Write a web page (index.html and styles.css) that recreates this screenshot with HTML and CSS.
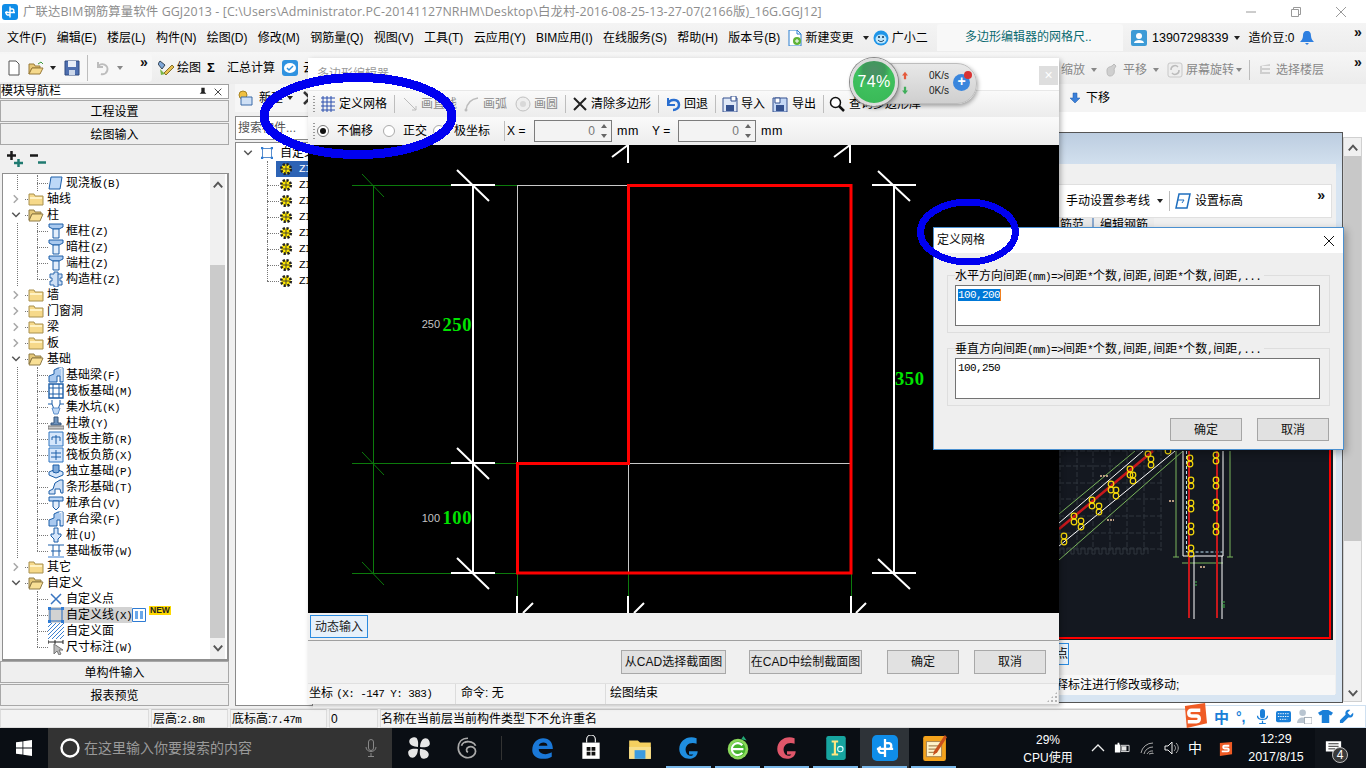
FILE: index.html
```html
<!DOCTYPE html>
<html lang="zh">
<head>
<meta charset="utf-8">
<title>广联达BIM钢筋算量软件 GGJ2013</title>
<link rel="stylesheet" href="styles.css">
</head>
<body>
<svg class="sprite" aria-hidden="true">
  <symbol id="folder" viewBox="0 0 16 16"><path d="M1 3h5l1 2h8v9H1z" fill="#f6d98a" stroke="#a8904f"/><path d="M2 6h12v2H2z" fill="#fff2c4"/></symbol>
  <symbol id="folderopen" viewBox="0 0 16 16"><path d="M1 3h5l1 2h6v2H4L1 13z" fill="#e5c878" stroke="#8f7a45"/><path d="M4 7h11l-3 7H1z" fill="#f8df95" stroke="#8f7a45"/></symbol>
  <symbol id="cr" viewBox="0 0 16 16"><path d="M5 3l5 5-5 5" stroke="#a8a8a8" stroke-width="2" fill="none"/></symbol>
  <symbol id="cd" viewBox="0 0 16 16"><path d="M3 5l5 5 5-5" stroke="#555" stroke-width="2" fill="none"/></symbol>
  <symbol id="col" viewBox="0 0 16 16"><path d="M1 1h14v3l-4 2H5L1 4z" fill="#a9c9ef" stroke="#1c5ea8"/><path d="M5 6h6v9H5z" fill="#e3eefb" stroke="#1c5ea8"/></symbol>
  <symbol id="colx" viewBox="0 0 16 16"><path d="M2 3h4V1h4v2h4v4h-2v3h2v4h-4v2H6v-2H2v-4h2V7H2z" fill="#cfe0f5" stroke="#2a66ac"/><path d="M10 3v11" stroke="#2a66ac"/></symbol>
  <symbol id="beam" viewBox="0 0 16 16"><path d="M1 15V9l5-2V3l4-2h5v14h-3V9H9v6z" fill="#a9c9ef" stroke="#1c5ea8"/><path d="M11 2l3-1v13" fill="none" stroke="#fff"/></symbol>
  <symbol id="raft" viewBox="0 0 16 16"><path d="M1 1h14v14H1z" fill="#fff" stroke="#1c5ea8" stroke-width="1.400"/><path d="M1 5h14M1 11h14M5 1v14M11 1v14" stroke="#1c5ea8"/></symbol>
  <symbol id="pit" viewBox="0 0 16 16"><path d="M0 5h4l2 5h4l2-5h4M4 1v4M12 1v4" fill="none" stroke="#1c5ea8"/><path d="M4 9h8l-2 6H6z" fill="#bcd6f5" stroke="#5d8fcb"/></symbol>
  <symbol id="pier" viewBox="0 0 16 16"><path d="M6 2h4v6h3v2H3V8h3z" fill="#6f93bd" stroke="#34557d"/><path d="M0 11h16v3H0z" fill="#c8c8c8" stroke="#777"/></symbol>
  <symbol id="rebm" viewBox="0 0 16 16"><path d="M1 1h14v14H1z" fill="#d5e6fb" stroke="#2f74c0"/><path d="M8 4v9M4 6h8v4M4 6v3" fill="none" stroke="#1c5ea8"/></symbol>
  <symbol id="rebn" viewBox="0 0 16 16"><path d="M1 1h14v14H1z" fill="#d5e6fb" stroke="#2f74c0"/><path d="M3 6h10M3 10h10M8 3v10" fill="none" stroke="#1c5ea8"/></symbol>
  <symbol id="indep" viewBox="0 0 16 16"><path d="M1 9l7-3 7 3v3l-7 3-7-3z" fill="#d5e6fb" stroke="#1c5ea8"/><path d="M5 2h6v7l-3 1-3-1z" fill="#7ea9da" stroke="#1c5ea8"/></symbol>
  <symbol id="strip" viewBox="0 0 16 16"><path d="M1 15v-3l4-2 2-6 5-3h3v13h-2l-1-4H7v5z" fill="#cfe0f5" stroke="#1c5ea8"/></symbol>
  <symbol id="cap" viewBox="0 0 16 16"><path d="M1 2h14v4H1z" fill="#bcd6f5" stroke="#1c5ea8"/><path d="M5 6h6v6l-3 3-3-3z" fill="#e3eefb" stroke="#1c5ea8"/></symbol>
  <symbol id="pile" viewBox="0 0 16 16"><path d="M6 1h4v6h3v2l-3 3v3H6v-3L3 9V7h3z" fill="#d5e6fb" stroke="#1c5ea8"/></symbol>
  <symbol id="band" viewBox="0 0 16 16"><path d="M0 2h16M0 14h16M5 2v12M11 2v12M3 8h10" stroke="#1c5ea8" fill="none"/><path d="M0 13h16v2H0z" fill="#9dbfe8"/></symbol>
  <symbol id="pt" viewBox="0 0 16 16"><path d="M3 3l10 10M13 3L3 13" stroke="#3a75c0" stroke-width="1.500"/></symbol>
  <symbol id="ln" viewBox="0 0 16 16"><path d="M2 2h12v12H2z" fill="none" stroke="#2168bd"/><path d="M0 0h3v3H0zM13 0h3v3h-3zM0 13h3v3H0zM13 13h3v3h-3z" fill="#2f7bd3"/></symbol>
  <symbol id="face" viewBox="0 0 16 16"><path d="M0 4l4-4M0 8l8-8M0 12L12 0M0 16L16 0M4 16L16 4M8 16l8-8M12 16l4-4" stroke="#3a80d0"/></symbol>
  <symbol id="dim" viewBox="0 0 16 16"><path d="M0 1v4M0 3h15M15 1v4M7 1v4" stroke="#222"/><path d="M6 5l0 10 3-3 2 4 2-1-2-4h4z" fill="#bbb" stroke="#777"/></symbol>
  <symbol id="plate" viewBox="0 0 16 16"><path d="M3 2h11l-2 12H1z" fill="#bdd8f7" stroke="#1c5ea8"/></symbol>
  <symbol id="gear" viewBox="0 0 16 16"><circle cx="8" cy="8" r="5.500" fill="#ffe800" stroke="#222" stroke-dasharray="2.500 1.800" stroke-width="3"/><path d="M4 8h8M8 4v8" stroke="#333"/></symbol>
  <symbol id="logo" viewBox="0 0 16 16"><rect width="16" height="16" rx="3" fill="#0f8de8"/><path d="M8 2.500v11M3 8.500h10M8 5h2.500a1.800 1.800 0 0 1 0 3.500M8 11H5.500a1.800 1.800 0 0 1 0-3.500" fill="none" stroke="#fff" stroke-width="1.400"/></symbol>
  <symbol id="swirl" viewBox="0 0 24 24"><path d="M19 3C11 0 3 5 3 13c0 6 5 9 9 9 5 0 8-3 8-7h-8v3h4c-1 2-6 2-7-3C8 9 13 6 19 8z" fill="currentColor"/></symbol>
</svg>

<div class="title">
  <svg class="ico16 logo"><use href="#logo"/></svg>
  <span class="title-text">广联达BIM钢筋算量软件 GGJ2013 - [C:\Users\Administrator.PC-20141127NRHM\Desktop\白龙村-2016-08-25-13-27-07(2166版)_16G.GGJ12]</span>
  <div class="winbtns">
    <svg class="winbtn" viewBox="0 0 12 12"><path d="M1 6h10" stroke="#9a9a9a"/></svg>
    <svg class="winbtn" viewBox="0 0 12 12"><path d="M1.500 3.500h7v7h-7zM3.500 3.500v-2h7v7h-2" fill="none" stroke="#9a9a9a"/></svg>
    <svg class="winbtn" viewBox="0 0 12 12"><path d="M1 1l10 10M11 1L1 11" stroke="#9a9a9a"/></svg>
  </div>
</div>

<div class="menu">
  <div class="m-left">
    <span>文件(F)</span><span>编辑(E)</span><span>楼层(L)</span><span>构件(N)</span><span>绘图(D)</span><span>修改(M)</span><span>钢筋量(Q)</span><span>视图(V)</span><span>工具(T)</span><span>云应用(Y)</span><span>BIM应用(I)</span><span>在线服务(S)</span><span>帮助(H)</span><span>版本号(B)</span>
    <span class="m-item">
      <svg class="ico16" viewBox="0 0 16 16"><path d="M2 0h8l4 4v12H2z" fill="#fff" stroke="#2a7fd0"/><path d="M10 0v4h4" fill="none" stroke="#2a7fd0"/><circle cx="10" cy="11" r="4" fill="#5fb336"/><path d="M8 11h4M10 9v4" stroke="#fff"/></svg>
      新建变更<i class="drop"></i>
    </span>
    <span class="m-item m-xiao">
      <svg class="ico16" viewBox="0 0 16 16"><circle cx="8" cy="8" r="7.500" fill="#1e95e8"/><ellipse cx="8" cy="9" rx="5.500" ry="4.500" fill="#bfe6fb"/><circle cx="6" cy="7" r="1" fill="#135"/><circle cx="10" cy="7" r="1" fill="#135"/><path d="M5 10c2 2 4 2 6 0" stroke="#135" fill="none"/></svg>
      广小二
    </span>
  </div>
  <div class="m-tab">多边形编辑器的网格尺..</div>
  <div class="m-user">
    <svg class="ico16" viewBox="0 0 16 16"><rect width="16" height="16" rx="2" fill="#3d9bd6"/><circle cx="8" cy="6" r="3" fill="#fff"/><path d="M3 13c0-4 10-4 10 0z" fill="#fff"/></svg>
    <span class="phone">13907298339</span><i class="drop"></i>
    <span class="beans">造价豆:0</span>
    <svg class="ico16" viewBox="0 0 16 16"><path d="M8 1c3 0 4 2 4 5 0 3 2 5 3 6H1c1-1 3-3 3-6 0-3 1-5 4-5z" fill="#2e7fe0"/><path d="M6 13h4l-2 2z" fill="#2e7fe0"/></svg>
  </div>
  <span class="more">»</span>
</div>

<div class="tools">
  <div class="t-group t-a">
    <svg class="ico16" viewBox="0 0 16 16"><path d="M3 1h7l3 3v11H3z" fill="#fff" stroke="#555"/></svg>
    <svg class="ico16 t-open" viewBox="0 0 16 16"><path d="M1 4h5l1 2h5v2H4l-3 6z" fill="#e8c878" stroke="#997a38"/><path d="M4 8h11l-3 6H1z" fill="#f5d98c" stroke="#997a38"/><path d="M10 4l3-2 2 2" fill="none" stroke="#3a9a3a"/></svg>
    <i class="drop"></i>
    <svg class="ico16 t-save" viewBox="0 0 16 16"><path d="M1 1h14v14H1z" fill="#4e6fb0" stroke="#2e4a80"/><path d="M4 1h8v6H4z" fill="#e8eef8"/><path d="M5 10h6v5H5z" fill="#cdd8ea"/></svg>
    <b class="sep"></b>
    <svg class="ico16" viewBox="0 0 16 16"><path d="M3 7a5 5 0 1 1 3 7M3 2v5h5" fill="none" stroke="#bdbdbd" stroke-width="2"/></svg>
    <i class="drop drop-g"></i>
    <span class="more">»</span>
  </div>
  <div class="t-group t-b">
    <svg class="ico16" viewBox="0 0 16 16"><path d="M2 1l5 4-3 4-4-5z" fill="#7fa7d8" stroke="#345"/><path d="M6 13l8-8 2 2-8 8z" fill="#e9c050" stroke="#85702a"/><path d="M2 9l5 5-4 1z" fill="#7ab648"/></svg>
    <span class="tb1">绘图</span>
    <b class="sigma">Σ</b>
    <span class="tb2">汇总计算</span>
    <svg class="ico16 t-cloud" viewBox="0 0 16 16"><rect width="16" height="16" rx="3" fill="#2f92e0"/><ellipse cx="8" cy="8" rx="6" ry="5" fill="#fff"/><path d="M5 8l2 2 4-4" stroke="#2f92e0" fill="none" stroke-width="1.500"/></svg>
    <span class="tb3">云</span>
  </div>
  <div class="t-group t-c">
    <span>缩放</span><i class="drop drop-g d1"></i>
    <svg class="ico16" viewBox="0 0 16 16"><path d="M3 8c0-3 3-3 5-4l2-2 2 2-2 3c1 3 0 7-4 7-3 0-3-3-3-6z" fill="#cfcfcf" stroke="#bbb"/></svg>
    <span class="tc-l">平移</span><i class="drop drop-g d2"></i>
    <svg class="ico16" viewBox="0 0 16 16"><rect x="1" y="1" width="14" height="14" rx="2" fill="#eee" stroke="#c8c8c8"/><path d="M4 8a4 4 0 0 1 7-3M12 8a4 4 0 0 1-7 3" fill="none" stroke="#bbb" stroke-width="1.500"/></svg>
    <span class="tc-l">屏幕旋转</span><i class="drop drop-g d3"></i>
    <b class="sep"></b>
    <svg class="ico16" viewBox="0 0 16 16"><path d="M3 4l10-2v2H5v2h8v2H5v2h8v2H3z" fill="#cfcfcf"/></svg>
    <span class="tc-l">选择楼层</span>
  </div>
  <span class="more">»</span>
</div>

<div class="main">
  <aside class="nav">
    <div class="nav-head"><span>模块导航栏</span>
      <svg class="nav-ic" viewBox="0 0 12 12"><path d="M4 1h4v5l2 2H2l2-2zM6 8v4" fill="#222"/></svg>
      <svg class="nav-ic" viewBox="0 0 12 12"><path d="M2 2l8 8M10 2l-8 8" stroke="#222"/></svg>
    </div>
    <div class="nav-btn">工程设置</div>
    <div class="nav-btn">绘图输入</div>
    <div class="nav-tool">
      <svg class="ico16" viewBox="0 0 16 16"><path d="M0 4.500h9M4.500 0v9" stroke="#1a1a1a" stroke-width="2.500"/><path d="M7 12h9M11.500 8v8" stroke="#1f7a70" stroke-width="2.500"/></svg>
      <svg class="ico16" viewBox="0 0 16 16"><path d="M0 4.500h8" stroke="#1a1a1a" stroke-width="2.500"/><path d="M8 11.500h8" stroke="#1f7a70" stroke-width="2.500"/></svg>
    </div>
    <div class="tree-box">
      <div class="tree">
        <div class="r l1 last-none"><svg class="ico16"><use href="#plate"/></svg><span>现浇板<em>(B)</em></span></div>
        <div class="r l0"><svg class="ch"><use href="#cr"/></svg><svg class="ico16"><use href="#folder"/></svg><span>轴线</span></div>
        <div class="r l0"><svg class="ch"><use href="#cd"/></svg><svg class="ico16"><use href="#folderopen"/></svg><span>柱</span></div>
        <div class="r l1"><svg class="ico16"><use href="#col"/></svg><span>框柱<em>(Z)</em></span></div>
        <div class="r l1"><svg class="ico16"><use href="#col"/></svg><span>暗柱<em>(Z)</em></span></div>
        <div class="r l1"><svg class="ico16"><use href="#col"/></svg><span>端柱<em>(Z)</em></span></div>
        <div class="r l1 end"><svg class="ico16"><use href="#colx"/></svg><span>构造柱<em>(Z)</em></span></div>
        <div class="r l0"><svg class="ch"><use href="#cr"/></svg><svg class="ico16"><use href="#folder"/></svg><span>墙</span></div>
        <div class="r l0"><svg class="ch"><use href="#cr"/></svg><svg class="ico16"><use href="#folder"/></svg><span>门窗洞</span></div>
        <div class="r l0"><svg class="ch"><use href="#cr"/></svg><svg class="ico16"><use href="#folder"/></svg><span>梁</span></div>
        <div class="r l0"><svg class="ch"><use href="#cr"/></svg><svg class="ico16"><use href="#folder"/></svg><span>板</span></div>
        <div class="r l0"><svg class="ch"><use href="#cd"/></svg><svg class="ico16"><use href="#folderopen"/></svg><span>基础</span></div>
        <div class="r l1"><svg class="ico16"><use href="#beam"/></svg><span>基础梁<em>(F)</em></span></div>
        <div class="r l1"><svg class="ico16"><use href="#raft"/></svg><span>筏板基础<em>(M)</em></span></div>
        <div class="r l1"><svg class="ico16"><use href="#pit"/></svg><span>集水坑<em>(K)</em></span></div>
        <div class="r l1"><svg class="ico16"><use href="#pier"/></svg><span>柱墩<em>(Y)</em></span></div>
        <div class="r l1"><svg class="ico16"><use href="#rebm"/></svg><span>筏板主筋<em>(R)</em></span></div>
        <div class="r l1"><svg class="ico16"><use href="#rebn"/></svg><span>筏板负筋<em>(X)</em></span></div>
        <div class="r l1"><svg class="ico16"><use href="#indep"/></svg><span>独立基础<em>(P)</em></span></div>
        <div class="r l1"><svg class="ico16"><use href="#strip"/></svg><span>条形基础<em>(T)</em></span></div>
        <div class="r l1"><svg class="ico16"><use href="#cap"/></svg><span>桩承台<em>(V)</em></span></div>
        <div class="r l1"><svg class="ico16"><use href="#beam"/></svg><span>承台梁<em>(F)</em></span></div>
        <div class="r l1"><svg class="ico16"><use href="#pile"/></svg><span>桩<em>(U)</em></span></div>
        <div class="r l1 end"><svg class="ico16"><use href="#band"/></svg><span>基础板带<em>(W)</em></span></div>
        <div class="r l0"><svg class="ch"><use href="#cr"/></svg><svg class="ico16"><use href="#folder"/></svg><span>其它</span></div>
        <div class="r l0"><svg class="ch"><use href="#cd"/></svg><svg class="ico16"><use href="#folderopen"/></svg><span>自定义</span></div>
        <div class="r l1 tail"><svg class="ico16"><use href="#pt"/></svg><span>自定义点</span></div>
        <div class="r l1 tail sel"><svg class="ico16"><use href="#ln"/></svg><span class="hl">自定义线<em>(X)</em></span>
          <svg class="newicon" viewBox="0 0 14 14"><path d="M.5.5h13v13H.5z" fill="#fff" stroke="#2f7bd3"/><path d="M3 3h3v8H3zM8 3h3v8H8z" fill="#6aa8ea"/></svg>
          <span class="newtag">NEW</span>
        </div>
        <div class="r l1 tail"><svg class="ico16"><use href="#face"/></svg><span>自定义面</span></div>
        <div class="r l1 tail end"><svg class="ico16"><use href="#dim"/></svg><span>尺寸标注<em>(W)</em></span></div>
      </div>
      <div class="vscroll">
        <svg class="arrow" viewBox="0 0 10 10"><path d="M1.500 7L5 3l3.500 4" fill="none" stroke="#555" stroke-width="1.600"/></svg>
        <div class="track"></div>
        <div class="thumb"></div>
        <svg class="arrow" viewBox="0 0 10 10"><path d="M1.500 3L5 7l3.500-4" fill="none" stroke="#555" stroke-width="1.600"/></svg>
      </div>
    </div>
    <div class="nav-btn nb-low">单构件输入</div>
    <div class="nav-btn">报表预览</div>
  </aside>

  <section class="mid">
    <div class="mid-tool">
      <svg class="ico16" viewBox="0 0 16 16"><circle cx="5" cy="5" r="4" fill="#f0c040" stroke="#a88420"/><path d="M3 7h11v8H3z" fill="#cfe0f5" stroke="#3a6aa8"/></svg>
      <span>新建</span><i class="drop"></i>
      <svg class="ico16" viewBox="0 0 16 16"><path d="M2 2l12 12M14 2L2 14" stroke="#333" stroke-width="2.500"/></svg>
    </div>
    <div class="mid-search">搜索构件...</div>
    <div class="mid-tree">
      <div class="mt-row"><svg class="ch"><use href="#cd"/></svg><svg class="ico12"><use href="#ln"/></svg><span>自定义</span></div>
      <div class="mt-row mt-sel"><svg class="ico14"><use href="#gear"/></svg><span>ZI</span></div>
      <div class="mt-row mt-k"><svg class="ico14"><use href="#gear"/></svg><span>ZI</span></div>
      <div class="mt-row mt-k"><svg class="ico14"><use href="#gear"/></svg><span>ZI</span></div>
      <div class="mt-row mt-k"><svg class="ico14"><use href="#gear"/></svg><span>ZI</span></div>
      <div class="mt-row mt-k"><svg class="ico14"><use href="#gear"/></svg><span>ZI</span></div>
      <div class="mt-row mt-k"><svg class="ico14"><use href="#gear"/></svg><span>ZI</span></div>
      <div class="mt-row mt-k"><svg class="ico14"><use href="#gear"/></svg><span>ZI</span></div>
      <div class="mt-row mt-k"><svg class="ico14"><use href="#gear"/></svg><span>ZI</span></div>
    </div>
  </section>

  <section class="work">
    <div class="work-tool">
      <svg class="ico12" viewBox="0 0 12 12"><path d="M4 1h4v5h3L6 11 1 6h3z" fill="#3a7fd8" stroke="#1f5aa8" stroke-width=".5"/></svg>
      <span>下移</span>
    </div>
    <div class="work-body"></div>
  </section>
</div>

<div class="status">
  <div class="st st0"></div>
  <div class="st st1">层高:<em>2.8m</em></div>
  <div class="st st2">底标高:<em>7.47m</em></div>
  <div class="st st3">0</div>
  <div class="st st4">名称在当前层当前构件类型下不允许重名</div>
</div>

<div class="taskbar">
  <svg class="win" viewBox="0 0 16 16"><path d="M0 2.300l6.500-.9v6.200H0zM7.300 1.300L16 0v7.600H7.300zM0 8.400h6.500v6.200L0 13.700zM7.300 8.400H16V16l-8.700-1.300z" fill="#fff"/></svg>
  <div class="search">
    <svg class="cortana" viewBox="0 0 20 20"><circle cx="10" cy="10" r="8.500" fill="none" stroke="#fff" stroke-width="2.400"/></svg>
    <span>在这里输入你要搜索的内容</span>
    <svg class="mic" viewBox="0 0 12 18"><rect x="3.500" y=".5" width="5" height="11" rx="2.500" fill="none" stroke="#888"/><path d="M1 8c0 6 10 6 10 0M6 14v3M3 17.500h6" fill="none" stroke="#888"/></svg>
  </div>
  <div class="apps">
    <div class="app"><svg viewBox="0 0 24 24"><path d="M11 11C7 11 3 9 3 6s3-4 5-4 4 3 3 9zM13 11c0-4 2-8 5-8s4 3 4 5-3 4-9 3zM13 13c4 0 8 2 8 5s-3 4-5 4-4-3-3-9zM11 13c0 4-2 8-5 8s-4-3-4-5 3-4 9-3z" fill="#e6e6e6"/></svg></div>
    <div class="app"><svg viewBox="0 0 24 24"><path d="M12 3c-6 0-9 4-9 9s4 9 9 9c4 0 7-3 7-6s-3-5-6-4-3 4-1 5M9 7c4-2 9 0 10 3M6 10c1-3 3-4 6-4" fill="none" stroke="#aaa" stroke-width="1.600"/></svg></div>
    <b class="tb-sep"></b>
    <div class="app"><svg viewBox="0 0 24 24"><path d="M3 14C3 7 8 3 13 3c6 0 9 4 9 10H9c0 5 7 6 12 3v4c-7 4-18 2-18-6zm6-4h8c0-4-7-4-8 0z" fill="#1a78d8"/></svg></div>
    <div class="app"><svg viewBox="0 0 24 24"><path d="M8 7V4a4 4 0 0 1 8 0v3" fill="none" stroke="#fff"/><path d="M4 7h16v15H4z" fill="#fff"/><path d="M8 11h3.500v3.500H8zM12.500 11H16v3.500h-3.500zM8 15.500h3.500V19H8zM12.500 15.500H16V19h-3.500z" fill="#111"/></svg></div>
    <div class="app"><svg viewBox="0 0 24 24"><path d="M2 5h8l2 2h10v15H2z" fill="#f5d060"/><path d="M2 11h20v11H2z" fill="#f9e08c"/><path d="M7 14h10v8H7z" fill="#3c9be0"/></svg></div>
    <div class="app on"><svg class="g-blue"><use href="#swirl"/></svg></div>
    <div class="app on"><svg viewBox="0 0 24 24"><circle cx="12" cy="13" r="9.500" fill="#8ad85a"/><circle cx="12" cy="13" r="7" fill="#46b52e"/><path d="M7 13h10M16 9.500A5.500 5.500 0 1 0 16 16.500" stroke="#fff" stroke-width="2" fill="none"/><path d="M17 1l3 4-5-1z" fill="#2a7"/></svg></div>
    <div class="app on"><svg class="g-red"><use href="#swirl"/></svg></div>
    <div class="app on"><svg viewBox="0 0 24 24"><rect x="3" y="1" width="18" height="22" rx="2" fill="#17a5a0"/><path d="M8 6h6M11 6v12M8 18h6" stroke="#ffe680" stroke-width="2"/><circle cx="16" cy="13" r="2.500" fill="none" stroke="#dff"/></svg></div>
    <div class="app on act"><svg class="ic-big" viewBox="0 0 16 16"><use href="#logo"/></svg></div>
    <div class="app on"><svg viewBox="0 0 24 24"><rect x="2" y="1" width="21" height="23" rx="2" fill="#f4a21c"/><rect x="5" y="6" width="14" height="14" fill="#fff2c8" stroke="#a85"/><path d="M7 10h9M7 13h9M7 16h6" stroke="#a85"/><path d="M22 0L12 15l-1 4 4-3L24 2z" fill="#c8501c"/></svg></div>
  </div>
  <div class="cpu"><span>29%</span><span>CPU使用</span></div>
  <div class="tray">
    <svg viewBox="0 0 14 10" class="tr-up"><path d="M1 8l6-6 6 6" fill="none" stroke="#eee" stroke-width="1.300"/></svg>
    <svg viewBox="0 0 18 14" class="tr-i"><path d="M1 3h3V1h2v2h1v9H1z" fill="#fff"/><path d="M8 4h9v7H8z" fill="none" stroke="#eee"/><path d="M9 5h5v5H9z" fill="#e8e8e8"/></svg>
    <svg viewBox="0 0 16 14" class="tr-i"><path d="M2 12a12 12 0 0 1 12-10M5 13a9 9 0 0 1 9-7M8 13a6 6 0 0 1 6-3M10 13l4-1v1" fill="none" stroke="#aaa"/></svg>
    <svg viewBox="0 0 16 14" class="tr-i"><path d="M1 5h3l4-4v12L4 9H1z" fill="none" stroke="#eee"/><path d="M10 4c2 2 2 4 0 6M12 2c3 3 3 7 0 10" fill="none" stroke="#aaa"/></svg>
    <span class="ime">中</span>
    <svg viewBox="0 0 16 16" class="tr-s"><path d="M2 2l13-1 0 13-13 2z" fill="#ee5a24"/><path d="M12 5H7c-2 0-2 3 0 3h3c2 0 2 3 0 3H4" fill="none" stroke="#fff" stroke-width="2"/></svg>
  </div>
  <div class="clock"><span>12:29</span><span>2017/8/15</span></div>
  <div class="notify">
    <svg viewBox="0 0 20 18"><path d="M1 1h18v12h-7l-3 4v-4H1z" fill="#fff"/><path d="M4 4h12M4 7h12M4 10h8" stroke="#111"/></svg>
    <span class="badge">4</span>
  </div>
</div>

<!-- back window -->
<div class="backwin">
  <div class="bw-panel">
    <div class="bw-tool">
      <span>手动设置参考线</span><i class="drop"></i><b class="sep"></b>
      <svg class="ico16" viewBox="0 0 16 16"><path d="M4 1h11l-3 14H1z" fill="none" stroke="#1f6fbf" stroke-width="1.500"/><path d="M3 7h6l-2 3" fill="none" stroke="#1f6fbf"/></svg>
      <span>设置标高</span>
      <span class="more">»</span>
    </div>
    <div class="bw-tabs"><span class="bwt1">筋范</span><span class="bwt2">编辑钢筋</span></div>
    <svg class="cad" viewBox="1000 228 333 411" aria-hidden="true">
      <rect x="1000" y="228" width="333" height="411" fill="#141820"/>
      <g stroke="#2f343c" stroke-dasharray="5 2" fill="none">
        <path d="M1059 450h103M1059 465h103M1059 482h103M1059 498h103M1059 515h103M1059 532h103M1059 548h103"/>
        <path d="M1060 450v100M1077 450v100M1093 450v100M1110 450v100M1127 450v100M1144 450v100M1161 450v100"/>
      </g>
      <path d="M1060 553v-6h4v6h3v-6h4v6h3v-6h4v6h3v-6h4v6h3v-6h4v6h3v-6h4v6h3v-6h4v6h3v-6h4v6h3v-6h4v6h3v-6h4v6h3v-6h4v6h3v-6h4v6h3v-6h4v6" stroke="#2f343c" fill="none"/>
      <g fill="none">
        <path d="M1059 513L1135 450M1059 559L1183 450" stroke="#7ab55c"/>
        <path d="M1059 522L1143 450M1059 545L1175 450" stroke="#fff"/>
        <path d="M1059 528L1153 450" stroke="#c8181c" stroke-width="2.500"/>
      </g>
      <g fill="none" stroke="#f5d90a" stroke-width="1.200">
        <circle cx="1064" cy="535" r="2.800"/><circle cx="1064" cy="541" r="2.800"/>
        <circle cx="1074" cy="515" r="2.800"/><circle cx="1074" cy="521" r="2.800"/><circle cx="1081" cy="520" r="2.800"/><circle cx="1081" cy="526" r="2.800"/>
        <circle cx="1092" cy="499" r="2.800"/><circle cx="1092" cy="505" r="2.800"/><circle cx="1099" cy="505" r="2.800"/><circle cx="1099" cy="511" r="2.800"/>
        <circle cx="1111" cy="483" r="2.800"/><circle cx="1111" cy="489" r="2.800"/><circle cx="1116" cy="489" r="2.800"/><circle cx="1116" cy="495" r="2.800"/>
        <circle cx="1130" cy="468" r="2.800"/><circle cx="1130" cy="474" r="2.800"/><circle cx="1133" cy="474" r="2.800"/><circle cx="1133" cy="480" r="2.800"/>
        <circle cx="1148" cy="453" r="2.800"/><circle cx="1151" cy="458" r="2.800"/><circle cx="1151" cy="464" r="2.800"/>
        <circle cx="1168" cy="450" r="2.800"/>
      </g>
      <g fill="none">
        <path d="M1176 450v106M1230 450v106M1182 562h41M1173 556h6M1227 556h6" stroke="#7ab55c"/>
        <path d="M1183 450v105h40V450" stroke="#fff"/>
        <path d="M1186.500 450v101h36" stroke="#bfe3f5" stroke-dasharray="3 2"/>
        <path d="M1189 450v167M1217 450v167" stroke="#c8181c" stroke-width="2"/>
        <path d="M1194 555v63M1222 555v63" stroke="#fff"/>
        <path d="M1195 581h2M1195 584h2M1222 601h3M1222 604h3M1222 606h3" stroke="#42b84a"/>
      </g>
      <g fill="none" stroke="#f5d90a" stroke-width="1.200">
        <circle cx="1190" cy="457" r="2.800"/><circle cx="1190" cy="463" r="2.800"/><circle cx="1216" cy="454" r="2.800"/><circle cx="1216" cy="460" r="2.800"/>
        <circle cx="1191" cy="479" r="2.800"/><circle cx="1191" cy="485" r="2.800"/><circle cx="1216" cy="479" r="2.800"/><circle cx="1216" cy="485" r="2.800"/>
        <circle cx="1191" cy="502" r="2.800"/><circle cx="1191" cy="508" r="2.800"/><circle cx="1216" cy="501" r="2.800"/><circle cx="1216" cy="507" r="2.800"/>
        <circle cx="1191" cy="525" r="2.800"/><circle cx="1191" cy="531" r="2.800"/><circle cx="1216" cy="525" r="2.800"/><circle cx="1216" cy="531" r="2.800"/>
        <circle cx="1191" cy="547" r="2.800"/><circle cx="1191" cy="553" r="2.800"/>
      </g>
      <path d="M1100 475h8M1169 500h6M1200 566h6M1107 519h7" stroke="#b89a80" stroke-width="2" stroke-dasharray="2 1"/>
      <path d="M1000 228h330v409h-330" fill="none" stroke="#f00" stroke-width="2"/>
    </svg>
    <div class="bw-pt"><span>点</span></div>
    <div class="bw-msg">释标注进行修改或移动;</div>
  </div>
</div>
<div class="rscroll">
  <svg class="arrow" viewBox="0 0 10 10"><path d="M1.500 7L5 3l3.500 4" fill="none" stroke="#555" stroke-width="1.600"/></svg>
  <div class="rthumb"></div>
  <div class="rtrack"></div>
  <svg class="arrow" viewBox="0 0 10 10"><path d="M1.500 3L5 7l3.500-4" fill="none" stroke="#555" stroke-width="1.600"/></svg>
</div>

<!-- polygon editor -->
<div class="editor">
  <div class="ed-title"><span>多边形编辑器</span><div class="ed-close">×</div></div>
  <div class="ed-tool">
    <b class="grip"></b>
    <svg class="ico16" viewBox="0 0 16 16"><path d="M1 2h14M1 6h14M1 10h14M1 14h14M3 0v16M7 0v16M11 0v16" stroke="#2a4fae"/></svg>
    <span class="t-lbl">定义网格</span><b class="sep sep7"></b>
    <svg class="ico16" viewBox="0 0 16 16"><path d="M2 2l12 12M14 14h-4M14 14v-4" stroke="#bcbcbc" fill="none"/></svg>
    <span class="t-lbl dis w36">画直线</span>
    <svg class="ico16" viewBox="0 0 16 16"><path d="M2 14C3 7 7 3 14 2" stroke="#bcbcbc" fill="none" stroke-width="1.500"/><circle cx="2" cy="14" r="1.500" fill="#bcbcbc"/></svg>
    <span class="t-lbl dis mr8">画弧</span>
    <svg class="ico16" viewBox="0 0 16 16"><circle cx="8" cy="8" r="7" fill="#eee" stroke="#c0c0c0"/><circle cx="8" cy="8" r="3" fill="#d8d8d8"/></svg>
    <span class="t-lbl dis">画圆</span><b class="sep"></b>
    <svg class="ico16" viewBox="0 0 16 16"><path d="M2 2l12 12M14 2L2 14" stroke="#222" stroke-width="2"/></svg>
    <span class="t-lbl">清除多边形</span><b class="sep"></b>
    <svg class="ico16" viewBox="0 0 16 16"><path d="M3 2v7h7" fill="none" stroke="#2a6fd0" stroke-width="2"/><path d="M3 8c2-6 11-5 11 1 0 3-3 5-6 5" fill="none" stroke="#2a6fd0" stroke-width="2.500"/></svg>
    <span class="t-lbl">回退</span><b class="sep"></b>
    <svg class="ico16" viewBox="0 0 16 16"><path d="M1 2h14v14H1z" fill="#dfe8f7" stroke="#34518f"/><path d="M4 9h8v6H4z" fill="#34518f"/><path d="M9 0h5v5H9z" fill="#fff" stroke="#34518f"/></svg>
    <span class="t-lbl">导入</span>
    <svg class="ico16" viewBox="0 0 16 16"><path d="M1 2h14v14H1z" fill="#c5d8f5" stroke="#34518f"/><path d="M4 9h8v6H4z" fill="#34518f"/><path d="M3 2h5v5H3z" fill="#fff" stroke="#34518f"/></svg>
    <span class="t-lbl ml4">导出</span><b class="sep sep5"></b>
    <svg class="ico16" viewBox="0 0 16 16"><circle cx="6.500" cy="6.500" r="5" fill="#fff" stroke="#111" stroke-width="1.500"/><path d="M10 10l5 5" stroke="#111" stroke-width="2.500"/></svg>
    <span class="t-lbl ml4">查询多边形库</span>
  </div>
  <div class="ed-opts">
    <b class="grip"></b>
    <i class="radio on"></i><span class="o1">不偏移</span>
    <i class="radio"></i><span class="o2">正交</span>
    <i class="radio"></i><span class="o3">极坐标</span>
    <b class="sep"></b>
    <span class="o4">X =</span>
    <div class="num"><span>0</span><i class="spin"></i></div><span class="o5">mm</span>
    <span class="o6">Y =</span>
    <div class="num"><span>0</span><i class="spin"></i></div><span class="o5">mm</span>
  </div>
  <svg class="canvas" viewBox="308 145 751 468">
    <rect x="308" y="145" width="751" height="468" fill="#000"/>
    <g stroke="#0c7a0c" fill="none">
      <path d="M352 185.500h165M352 463.500h165M352 573.500h165M373.500 185v388M517.500 573v24M628.500 573v24M851.500 573v24"/>
      <path d="M362 174l22 23M362 452l22 23M362 562l22 23"/>
    </g>
    <g stroke="#c8c8c8" fill="none">
      <path d="M517 185.500h111M517.500 185v278M628 463.500h222M628.500 463v110"/>
    </g>
    <g stroke="#fff" stroke-width="2" fill="none">
      <path d="M473 185v388M451 185h44M451 463h44M451 573h44M457 170l32 31M457 448l32 31M457 558l32 31"/>
      <path d="M894 185v388M872 185h44M872 573h44M878 171l32 30M878 559l32 30"/>
      <path d="M628 145v18M612 157l16-12M850 145v18M834 157l16-12"/>
      <path d="M517 596v17M628 596v17M851 596v17M523 613l10-10M634 613l10-10M856 613l10-10"/>
    </g>
    <path d="M628.500 185.500h222.500v387.500H517.500V463.500h111z" fill="none" stroke="#f00" stroke-width="3"/>
    <g class="dimg"><text x="440" y="328" text-anchor="end">250</text><text x="440" y="522" text-anchor="end">100</text></g>
    <g class="dimb"><text x="472" y="331" text-anchor="end">250</text><text x="472" y="524" text-anchor="end">100</text><text x="895" y="385">350</text></g>
  </svg>
  <div class="ed-dyn"><button class="dyn" type="button">动态输入</button></div>
  <div class="ed-act">
    <button class="btn b1" type="button">从CAD选择截面图</button>
    <button class="btn b2" type="button">在CAD中绘制截面图</button>
    <button class="btn b3" type="button">确定</button>
    <button class="btn b4" type="button">取消</button>
  </div>
  <div class="ed-status">
    <div class="es es1">坐标 <em>(X: -147 Y: 383)</em></div>
    <div class="es es2">命令: 无</div>
    <div class="es es3">绘图结束</div>
    <b class="sgrip"></b>
  </div>
</div>

<!-- net speed widget -->
<div class="speed">
  <div class="sp-ball">74%</div>
  <div class="sp-rates">
    <svg viewBox="0 0 8 10" class="sp-ar"><path d="M4 0l4 5H5.500v5h-3V5H0z" fill="#e55a3c"/></svg><span>0K/s</span>
    <svg viewBox="0 0 8 10" class="sp-ar"><path d="M4 10L0 5h2.500V0h3v5H8z" fill="#3fae5a"/></svg><span>0K/s</span>
  </div>
  <div class="sp-plus">+<i></i></div>
</div>

<!-- dialog -->
<div class="dialog">
  <div class="dl-title"><span>定义网格</span>
    <svg class="dl-x" viewBox="0 0 12 12"><path d="M1 1l10 10M11 1L1 11" stroke="#111"/></svg>
  </div>
  <div class="dl-body">
    <div class="dl-group">
      <div class="legend">水平方向间距<em>(mm)=&gt;</em>间距<em>*</em>个数<em>,</em>间距<em>,</em>间距<em>*</em>个数<em>,</em>间距<em>,...</em></div>
      <div class="ta"><span class="seltext">100,200</span><i class="caret"></i></div>
    </div>
    <div class="dl-group">
      <div class="legend">垂直方向间距<em>(mm)=&gt;</em>间距<em>*</em>个数<em>,</em>间距<em>,</em>间距<em>*</em>个数<em>,</em>间距<em>,...</em></div>
      <div class="ta"><span>100,250</span></div>
    </div>
    <div class="dl-btns">
      <button class="btn dbtn" type="button">确定</button>
      <button class="btn dbtn" type="button">取消</button>
    </div>
  </div>
</div>

<!-- IME bar -->
<div class="ime-bar">
  <svg class="sg" viewBox="0 0 26 26"><path d="M3 3l21-3 2 21-21 5z" fill="#ef5b25"/><path d="M19 7.500H10c-4 0-4 6 0 6h5c4 0 4 6 0 6H6" fill="none" stroke="#fff" stroke-width="3.500"/></svg>
  <span class="ime-zh">中</span>
  <span class="ime-p">°,</span>
  <svg class="ime-i" viewBox="0 0 16 18"><rect x="5" y="0" width="6" height="11" rx="3" fill="#1a7fd8"/><path d="M2 8c0 6 12 6 12 0M8 14v3M4 17.500h8" fill="none" stroke="#1a7fd8" stroke-width="1.500"/></svg>
  <svg class="ime-i" viewBox="0 0 16 14"><rect y="1" width="16" height="12" rx="2" fill="#1a7fd8"/><path d="M2 4h12M2 7h12M4 10h8" stroke="#fff" stroke-dasharray="1.500 1"/></svg>
  <svg class="ime-i" viewBox="0 0 16 16"><circle cx="6" cy="4" r="3.500" fill="#b8c4d0"/><path d="M0 15c0-8 12-8 12 0z" fill="#b8c4d0"/><rect x="8" y="9" width="8" height="7" fill="#fff" stroke="#a0aab4"/></svg>
  <svg class="ime-i" viewBox="0 0 16 16"><path d="M5 1h6l5 3-2 3-2-1v9H4V6L2 7 0 4z" fill="#1a7fd8"/></svg>
  <svg class="ime-i" viewBox="0 0 16 16"><path d="M15 4l-3 3-3-3 3-3c-3-1-6 1-5 5L1 12v3h3l6-6c4 1 6-2 5-5z" fill="#1a7fd8"/></svg>
</div>

<!-- hand-drawn annotation ellipses -->
<svg class="marks" viewBox="0 0 1366 768" aria-hidden="true">
  <ellipse cx="358" cy="116" rx="94" ry="38.500" fill="none" stroke="#0000f0" stroke-width="9" shape-rendering="crispEdges"/>
  <ellipse cx="968" cy="232" rx="47.500" ry="30" fill="none" stroke="#0000f0" stroke-width="7" shape-rendering="crispEdges"/>
</svg>
</body>
</html>
```
FILE: styles.css
```css
*{box-sizing:border-box;margin:0;padding:0}
html,body{width:1366px;height:768px;overflow:hidden}
body{position:relative;background:#f0f0f0;color:#000;font:12px/16px "Liberation Sans","Noto Sans CJK SC",sans-serif}
em{font-style:normal}
svg{display:block;flex:none}
.sprite{position:absolute;width:0;height:0}
.ico16{width:16px;height:16px}
.ico14{width:14px;height:14px}
.ico12{width:12px;height:12px}
.sep{display:block;flex:none;width:1px;height:20px;background:#bdbdbd}
.more{font:bold 14px/12px "Liberation Sans",sans-serif;color:#111;flex:none}
.drop{display:block;flex:none;width:0;height:0;border:3.500px solid transparent;border-top:4px solid #222;border-bottom:0}
.drop-g{border-top-color:#888}

/* title */
.title{height:23px;background:#fff;display:flex;align-items:center;padding-left:2px}
.logo{width:16px;height:16px}
.title-text{margin-left:5px;color:#8d8d8d;font:12.400px/23px "Open Sans","Noto Sans CJK SC",sans-serif;white-space:nowrap;letter-spacing:.1px}
.winbtns{margin-left:auto;display:flex;gap:33px;margin-right:19px}
.winbtn{width:12px;height:12px}

/* menu */
.menu{height:29px;display:flex;align-items:center;background:linear-gradient(#f4f4f4,#ededed);position:relative}
.m-left{width:937px;display:flex;align-items:center;gap:10.300px;padding-left:7px;white-space:nowrap}
.m-item{display:flex;align-items:center;gap:3px;margin-left:-4px}
.m-item .drop{margin-left:6px}
.m-xiao{margin-left:-6px}
.m-tab{width:186px;height:27px;background:#f8f8f8;color:#0a6a70;font-size:12px;line-height:27px;padding-left:28px;white-space:nowrap;border-radius:3px 3px 0 0}
.m-user{display:flex;align-items:center;margin-left:8px;width:226px}
.phone{font-size:12.500px;margin-left:5px}
.m-user .drop{margin:0 8px 0 6px}
.beans{font-size:12px;margin-right:4px;white-space:nowrap}
.menu>.more{position:absolute;left:1354px;top:3px}

/* toolbar */
.tools{height:32px;display:flex;align-items:center;background:linear-gradient(#f6f6f6,#ececec);position:relative}
.t-group{display:flex;align-items:center}
.t-a{width:152px;padding-left:6px;height:28px;position:relative;background:#f7f7f7;border-radius:0 4px 4px 0}
.t-open{margin-left:6px}
.t-a .drop{margin-left:6px}
.t-save{margin-left:8px}
.t-a .sep{margin:0 7px;height:26px}
.t-a .drop-g{margin-left:6px}
.t-a .more{margin-left:17px;margin-top:-12px}
.t-b{padding-left:6px;white-space:nowrap}
.tb1{margin-left:3px}
.sigma{font:bold 13px/16px "Liberation Sans",sans-serif;margin:0 11px 0 6px;width:9px}
.t-cloud{margin-left:7px}
.tb3{margin-left:5px}
.t-c{position:absolute;left:1061px;top:8px;color:#888;font-size:12px;white-space:nowrap}
.t-c .d1{margin:0 7px 0 6px}
.tc-l{margin-left:3px}
.t-c .d2{margin:0 8px 0 6px}
.t-c .d3{margin:0 7px 0 2px}
.t-c .sep{margin-right:7px}
.tools>.more{position:absolute;left:1354px;top:4px}

/* main */
.main{height:624px;display:flex;background:#f0f0f0}
.nav{width:230px;flex:none;display:flex;flex-direction:column;font-size:14px}
.nav-head{height:15px;background:#fff;border:1px solid #a0a0a0;display:flex;align-items:center;font-size:12px;line-height:13px;margin-right:1px;white-space:nowrap}
.nav-head span{margin-right:auto}
.nav-ic{width:10px;height:10px;margin-right:5px}
.nav-btn{height:22px;margin:1px 1px 0 0;background:#efefef;border:1px solid #a8a8a8;text-align:center;line-height:22px;font-size:12px}
.nav-tool{height:28px;display:flex;align-items:center;gap:7px;padding-left:7px}
.tree-box{height:488px;margin:0 1px 0 2px;border:1px solid #8f8f8f;border-width:1px 2px 2px 1px;background:#fff;display:flex;position:relative;font-size:12px}
.tree{flex:1;padding-top:1px;overflow:hidden}
.r{height:16px;display:flex;align-items:center;position:relative;white-space:nowrap}
.r em,.es em,.st em{font:11px/16px "Liberation Mono",monospace;letter-spacing:-.6px}
.l0{padding-left:25px}
.l0 .ch{position:absolute;left:7px;top:2px;width:12px;height:12px}
.l0 span{margin-left:3px;position:relative}
.l0::before{content:"";position:absolute;left:22px;top:8px;width:3px;border-top:1px dotted #777}
.l1{padding-left:45px;background:linear-gradient(#777 50%,transparent 50%) 14px 0/1px 2px repeat-y}
.l1 span{margin-left:2px}
.l1::before{content:"";position:absolute;left:34px;top:8px;width:11px;border-top:1px dotted #777}
.l1::after{content:"";position:absolute;left:34px;top:0;height:16px;border-left:1px dotted #777}
.l1.end::after{height:8px}
.l1.tail{background-image:none}
.hl{background:#d2d2d2;height:16px;margin-left:0!important;padding-left:2px}
.sel .ico16{background:#d2d2d2}
.newicon{width:14px;height:14px;margin-left:0}
.newtag{position:absolute;left:146px;top:-1px;background:#ffd900;color:#222;font:bold 8.500px/9px "Liberation Sans",sans-serif;padding:0 1px;margin:0!important}
.vscroll{width:15px;flex:none;margin:0 2px 0 0;background:#f0f0f0;display:flex;flex-direction:column;align-items:center;padding-top:5px}
.arrow{width:12px;height:12px;flex:none}
.track{height:74px;width:15px}
.thumb{height:373px;width:15px;background:#cbcbcb}
.vscroll .arrow:last-child{margin-top:4px}
.nb-low{margin-top:0}

.mid{width:78px;flex:none;margin-left:5px;display:flex;flex-direction:column}
.mid-tool{height:28px;display:flex;align-items:center;padding-left:3px;background:#f6f6f6;white-space:nowrap}
.mid-tool span{font-size:12px;margin-left:5px}
.mid-tool .drop{margin:0 9px 0 4px}
.mid-search{height:24px;margin-top:4px;background:#fff;border:1px solid #8a8a8a;border-right:0;padding-left:2px;line-height:22px;color:#555;white-space:nowrap;font-size:12px}
.mid-tree{flex:1;margin-top:2px;background:#fff;border:1px solid #8a8a8a;padding-top:2px;margin-bottom:2px}
.mt-row{height:16px;display:flex;align-items:center;position:relative;padding-left:43px;font:11px/16px "Liberation Mono",monospace;letter-spacing:-.6px}
.mt-row:first-child{padding-left:25px;font:12px/16px "Liberation Sans","Noto Sans CJK SC",sans-serif;letter-spacing:0}
.mt-row:first-child .ch{position:absolute;left:6px;top:2px;width:12px;height:12px}
.mt-row:first-child span{margin-left:7px;white-space:nowrap}
.mt-row span{margin-left:6px}
.mt-sel{background:#2d63b5;color:#fff;margin-left:40px;padding-left:3px}
.mt-k::before{content:"";position:absolute;left:31px;top:8px;width:12px;border-top:1px dotted #777}
.mt-k::after{content:"";position:absolute;left:31px;top:-16px;height:24px;border-left:1px dotted #777}

.work{flex:1;display:flex;flex-direction:column;min-width:0}
.work-tool{height:28px;background:#f4f4f4;display:flex;align-items:center;gap:5px;padding-left:756px;font-size:12px}
.work-body{flex:1;background:#fff}

/* status */
.status{height:20px;display:flex;gap:2px;background:#f0f0f0;border-top:1px solid #e4e4e4;font-size:12px;line-height:18px}
.st{border:1px solid #dcdcdc;border-top-color:#c8c8c8;background:#f3f3f3;padding-left:1px;white-space:nowrap}
.st0{width:149px}.st1{width:77px}.st2{width:97px}.st3{width:49px;padding-left:1px}.st4{flex:1;padding-left:0}

/* taskbar */
.taskbar{height:40px;background:#0a0e14;display:flex;align-items:center;color:#fff;position:relative}
.win{width:16px;height:16px;margin-left:16px}
.search{position:absolute;left:48px;top:0;width:344px;height:40px;background:#333;display:flex;align-items:center;padding-left:12px;font-size:14px;color:#9a9a9a}
.cortana{width:20px;height:20px}
.search span{margin-left:4px;white-space:nowrap;line-height:40px}
.mic{width:12px;height:18px;margin-left:113px}
.apps{position:absolute;left:394px;top:0;height:40px;display:flex}
.app{width:49px;height:40px;display:flex;align-items:center;justify-content:center;position:relative}
.app svg{width:26px;height:26px}
.g-blue{color:#1f8ee0}
.g-red{color:#e0566a}
.tb-sep{display:block;width:1px;height:24px;margin:8px 15px 8px 9px;background:#333;flex:none}
.app.on::after{content:"";position:absolute;left:2px;right:2px;bottom:0;height:2px;background:#7ab8ea}
.app.act{background:#2e3338}
.cpu{position:absolute;left:1018px;top:3px;width:60px;text-align:center;display:flex;flex-direction:column;font-size:12px;line-height:18px}
.tray{position:absolute;left:1091px;top:0;height:40px;display:flex;align-items:center;gap:9px}
.tr-up{width:14px;height:10px}
.tr-i{width:16px;height:14px}
.ime{font-size:14px;width:14px;margin-left:-1px}
.tr-s{width:15px;height:15px;margin-left:7px}
.clock{position:absolute;left:1235px;top:2px;width:82px;display:flex;flex-direction:column;align-items:center;font-size:12.500px;line-height:18px}
.notify{position:absolute;left:1315px;top:0;width:51px;height:40px;background:#10141a;display:flex;align-items:center;padding-left:10px}
.notify svg{width:17px;height:16px}
.badge{position:absolute;left:17px;top:19px;width:16px;height:16px;border-radius:50%;background:#3a3a3a;border:1px solid #bbb;font-size:12px;line-height:14px;text-align:center}

/* back window */
.backwin{position:absolute;left:1000px;top:132px;width:343px;height:571px;background:linear-gradient(#bccde0 0,#d8e5f2 40px,#d8e5f2 100%);border:1px solid #555;border-left:0;padding:31px 6px 8px 0}
.bw-panel{height:100%;background:#f0f0f0;position:relative;padding-top:20px}
.bw-tool{height:34px;margin-right:4px;background:#fff;border:1px solid #e0e0e0;display:flex;align-items:center;padding-left:65px;font-size:12px;white-space:nowrap;position:relative}
.bw-tool .drop{margin:0 6px 0 7px}
.bw-tool .sep{margin-right:5px}
.bw-tool .ico16{margin-right:4px}
.bw-tool .more{position:absolute;right:6px;top:4px}
.bw-tabs{height:10px;display:flex;font-size:12px;line-height:14px;padding-left:60px;background:#f0f0f0}
.bwt1{width:34px;background:#e8e8e8;border-right:2px solid #8ba8cc}
.bwt2{width:60px;background:#ececec;padding-left:6px}
.cad{width:333px;height:411px;margin-top:1px}
.bw-pt{height:22px;width:69px;margin-top:3px;border:1px solid #2a8be0;background:#e8f2fb;line-height:20px;font-size:12px;text-align:right}
.bw-msg{height:20px;margin-top:10px;background:#f7f7f7;padding-left:56px;white-space:nowrap;line-height:20px;font-size:12px;margin-right:1px}
.rscroll{position:absolute;left:1343px;top:137px;width:19px;height:565px;background:#f0f0f0;border:1px solid #d0d0d0;display:flex;flex-direction:column;align-items:center;padding-top:4px}
.rthumb{width:17px;height:385px;margin-top:2px;background:#c8c8c8}
.rtrack{flex:1}
.rscroll .arrow:last-child{margin-bottom:2px}

/* editor */
.editor{position:absolute;left:308px;top:58px;width:751px;height:646px;background:#f0f0f0;box-shadow:2px 2px 5px rgba(0,0,0,.28);display:flex;flex-direction:column;overflow:hidden}
.ed-title{height:32px;background:#fff;position:relative;color:#9a9a9a;font-size:12px;padding:8px 0 0 9px}
.ed-close{position:absolute;left:731px;top:8px;width:19px;height:19px;background:#dedede;color:#fff;text-align:center;line-height:18px;font-size:14px}
.ed-tool{height:27px;display:flex;align-items:center;padding-left:5px;background:linear-gradient(#fafafa,#ececec);border-top:1px solid #e8e8e8;white-space:nowrap}
.grip{display:block;flex:none;width:2px;height:16px;margin-right:5px;background:linear-gradient(#999 50%,transparent 50%) 0 0/2px 3px}
.t-lbl{margin:0 7px 0 3px;font-size:12px}
.ed-tool .sep{margin-right:6px;height:18px}
.ed-tool .sep7{margin-right:7px}
.ed-tool .sep5{margin-right:5px}
.dis{color:#8a8a8a}
.w36{width:36px}
.mr8{margin-right:8px}
.ml4{margin-left:4px}
.ed-opts{height:28px;display:flex;align-items:center;padding-left:5px;background:linear-gradient(#fafafa,#ececec);white-space:nowrap;font-size:12px}
.ed-opts .grip{margin-right:2px}
.radio{display:block;flex:none;width:12px;height:12px;border-radius:50%;border:1px solid #aaa;background:#fff;position:relative}
.radio.on{border-color:#777}
.radio.on::after{content:"";position:absolute;left:2px;top:2px;width:6px;height:6px;border-radius:50%;background:#111}
.o1{margin:0 10px 0 8px}
.o2{margin:0 6px 0 8px}
.o3{margin:0 14px 0 9px}
.o4{margin:0 7px 0 2px;width:20px}
.o5{margin:0 13px 0 5px;width:22px;font-size:12.500px;letter-spacing:.5px}
.o6{margin:0 6px 0 0;width:20px}
.num{width:78px;height:22px;border:1px solid #7c7c7c;background:#f3f3f3;display:flex;align-items:center;justify-content:flex-end;color:#777;padding-right:16px;position:relative;font-size:12px}
.spin{position:absolute;right:3px;top:3px;width:7px;height:14px}
.spin::before{content:"";position:absolute;top:0;left:0;border:3.500px solid transparent;border-bottom:4px solid #666;border-top:0}
.spin::after{content:"";position:absolute;bottom:0;left:0;border:3.500px solid transparent;border-top:4px solid #666;border-bottom:0}
.canvas{width:751px;height:468px;flex:none}
.dimg text{fill:#c4c4c4;font:11px "Liberation Sans",sans-serif}
.dimb text{fill:#00e400;font:bold 18.500px "Liberation Serif",serif;letter-spacing:.6px}
.ed-dyn{height:28px;padding:2px 0 0 2px;border-bottom:1px solid #a0a0a0}
.dyn{display:block;width:58px;height:23px;border:1px solid #2a8be0;background:#e6f1fb;color:#222;font:12px/20px "Liberation Sans","Noto Sans CJK SC",sans-serif}
.ed-act{height:42px;display:flex;align-items:flex-start;padding:9px 0 0 313px}
.btn{display:block;height:24px;background:#e1e1e1;border:1px solid #a8a8a8;color:#111;font:12px/20px "Liberation Sans","Noto Sans CJK SC",sans-serif;white-space:nowrap}
.b1{width:105px;margin-right:23px}
.b2{width:113px;margin-right:25px}
.b3{width:72px;margin-right:15px}
.b4{width:72px}
.ed-status{height:21px;display:flex;gap:3px;background:#f4f4f4;border-top:1px solid #e0e0e0;padding-left:1px;font-size:12px;line-height:19px;position:relative;white-space:nowrap}
.es{border-right:1px solid #dcdcdc}
.es1{width:147px}.es2{width:147px;padding-left:2px}.es3{flex:1;padding-left:1px}
.sgrip{position:absolute;right:1px;bottom:1px;width:12px;height:12px;background:radial-gradient(circle,#b5b5b5 50%,transparent 55%) 0 0/4px 4px;clip-path:polygon(100% 0,100% 100%,0 100%)}

/* speed widget */
.speed{position:absolute;left:850px;top:58px;width:127px;height:48px;display:flex;align-items:center}
.speed::before{content:"";position:absolute;left:24px;top:5px;right:0;height:39px;border-radius:0 20px 20px 0;background:linear-gradient(#e8e8e8,#cfcfcf);border:1px solid #bdbdbd;box-shadow:1px 2px 4px rgba(0,0,0,.35)}
.sp-ball{position:relative;width:48px;height:48px;border-radius:50%;background:radial-gradient(circle at 50% 22%,#4f8f68 0,#3d9a5a 28%,#3fc15e 42%,#38b655 100%);border:3px solid #dcdcdc;box-shadow:0 0 0 1px #888,1px 2px 4px rgba(0,0,0,.4);color:#fff;font-size:16px;line-height:42px;text-align:center;letter-spacing:.3px}
.sp-rates{position:relative;display:grid;grid-template-columns:8px 1fr;width:47px;margin-left:4px;row-gap:5px;font-size:10px;line-height:10px;align-items:center;color:#222;margin-top:2px}
.sp-rates span{text-align:right}
.sp-ar{width:6px;height:9px}
.sp-plus{position:relative;width:17px;height:17px;margin-left:4px;border-radius:50%;background:#3a86dd;color:#fff;font:bold 14px/15px "Liberation Sans",sans-serif;text-align:center}
.sp-plus i{position:absolute;right:-2px;top:-3px;width:8px;height:8px;border-radius:50%;background:#d93232}

/* dialog */
.dialog{position:absolute;left:933px;top:227px;width:411px;height:223px;background:#efefef;border:1px solid #4a90d0;box-shadow:2px 3px 8px rgba(0,0,0,.3)}
.dl-title{height:25px;background:#fff;position:relative;padding:4px 0 0 3px;font-size:12px;color:#111}
.dl-x{position:absolute;right:8px;top:7px;width:12px;height:12px}
.dl-body{padding:22px 13px 0 13px}
.dl-group{height:58px;border:1px solid #dedede;position:relative;padding:9px 9px 0 7px;margin-bottom:15px}
.legend{position:absolute;left:7px;top:-8px;background:#efefef;padding-right:3px;font-size:12px;line-height:16px;white-space:nowrap}
.legend em{font:11px/16px "Liberation Mono",monospace;letter-spacing:-.6px}
.ta{height:41px;background:#fff;border:1px solid #737373;padding:3px 2px;font:11px/12px "Liberation Mono",monospace;letter-spacing:-.6px;display:flex;align-items:flex-start}
.seltext{background:#0078d7;color:#fff}
.caret{display:block;width:1px;height:12px;background:#f08020}
.dl-btns{display:flex;justify-content:flex-end;gap:15px;margin-top:-3px;padding-right:1px}
.dbtn{width:72px;height:23px;background:#e1e1e1;border-color:#a5a5a5}

/* ime */
.ime-bar{position:absolute;left:1190px;top:705px;width:176px;height:23px;background:#fff;border:1px solid #cfe0f0;display:flex;align-items:center;color:#1a7fd8}
.sg{position:absolute;left:-9px;top:-3px;width:25px;height:25px}
.ime-zh{margin-left:23px;font:bold 15px/20px "Noto Sans CJK SC",sans-serif}
.ime-p{margin-left:7px;font:bold 14px/14px "Liberation Sans",sans-serif;width:14px}
.ime-i{width:15px;height:15px;margin-left:6px}
.ime-p+.ime-i{margin-left:5px}

/* annotation */
.marks{position:absolute;left:0;top:0;width:1366px;height:768px;pointer-events:none}
```
